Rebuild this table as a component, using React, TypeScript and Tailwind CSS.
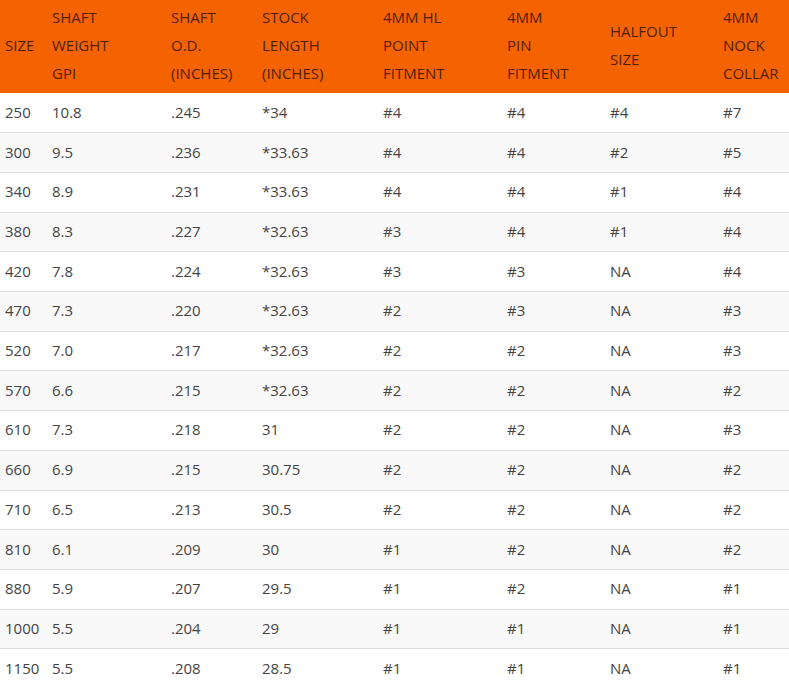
const headers = [
  ["SIZE"],
  ["SHAFT", "WEIGHT", "GPI"],
  ["SHAFT", "O.D.", "(INCHES)"],
  ["STOCK", "LENGTH", "(INCHES)"],
  ["4MM HL", "POINT", "FITMENT"],
  ["4MM", "PIN", "FITMENT"],
  ["HALFOUT", "SIZE"],
  ["4MM", "NOCK", "COLLAR"],
];

const widths = ["w-[47px]", "w-[119px]", "w-[91px]", "w-[121px]", "w-[124px]", "w-[103px]", "w-[113px]", "w-[71px]"];

const rows = [
  ["250", "10.8", ".245", "*34", "#4", "#4", "#4", "#7"],
  ["300", "9.5", ".236", "*33.63", "#4", "#4", "#2", "#5"],
  ["340", "8.9", ".231", "*33.63", "#4", "#4", "#1", "#4"],
  ["380", "8.3", ".227", "*32.63", "#3", "#4", "#1", "#4"],
  ["420", "7.8", ".224", "*32.63", "#3", "#3", "NA", "#4"],
  ["470", "7.3", ".220", "*32.63", "#2", "#3", "NA", "#3"],
  ["520", "7.0", ".217", "*32.63", "#2", "#2", "NA", "#3"],
  ["570", "6.6", ".215", "*32.63", "#2", "#2", "NA", "#2"],
  ["610", "7.3", ".218", "31", "#2", "#2", "NA", "#3"],
  ["660", "6.9", ".215", "30.75", "#2", "#2", "NA", "#2"],
  ["710", "6.5", ".213", "30.5", "#2", "#2", "NA", "#2"],
  ["810", "6.1", ".209", "30", "#1", "#2", "NA", "#2"],
  ["880", "5.9", ".207", "29.5", "#1", "#2", "NA", "#1"],
  ["1000", "5.5", ".204", "29", "#1", "#1", "NA", "#1"],
  ["1150", "5.5", ".208", "28.5", "#1", "#1", "NA", "#1"],
];

export default function App() {
  return (
    <div className="w-[789px] h-[695px] overflow-hidden bg-white font-['Open_Sans',sans-serif] text-[15px]">
      <table className="w-[789px] table-fixed border-collapse">
        <colgroup>
          {widths.map((w, i) => (
            <col key={i} className={w} />
          ))}
        </colgroup>
        <thead>
          <tr className="h-[93px] bg-[#f56300] text-[#521f00]">
            {headers.map((h, i) => (
              <th key={i} className="px-[5px] pt-0 pb-[3px] text-left align-middle font-normal leading-[28px]">
                {h.map((line) => (
                  <div key={line} className="whitespace-nowrap">{line}</div>
                ))}
              </th>
            ))}
          </tr>
        </thead>
        <tbody className="text-[#444]">
          {rows.map((r, i) => (
            <tr
              key={i}
              className={`h-[39.71px] ${i < rows.length - 1 ? "border-b border-[#dddddd]" : ""} ${i % 2 === 1 ? "bg-[#f9f9f9]" : "bg-white"}`}
            >
              {r.map((c, j) => (
                <td key={j} className="px-[5px] pt-0 pb-[2px] align-middle leading-[24px] whitespace-nowrap">
                  {c}
                </td>
              ))}
            </tr>
          ))}
        </tbody>
      </table>
    </div>
  );
}
